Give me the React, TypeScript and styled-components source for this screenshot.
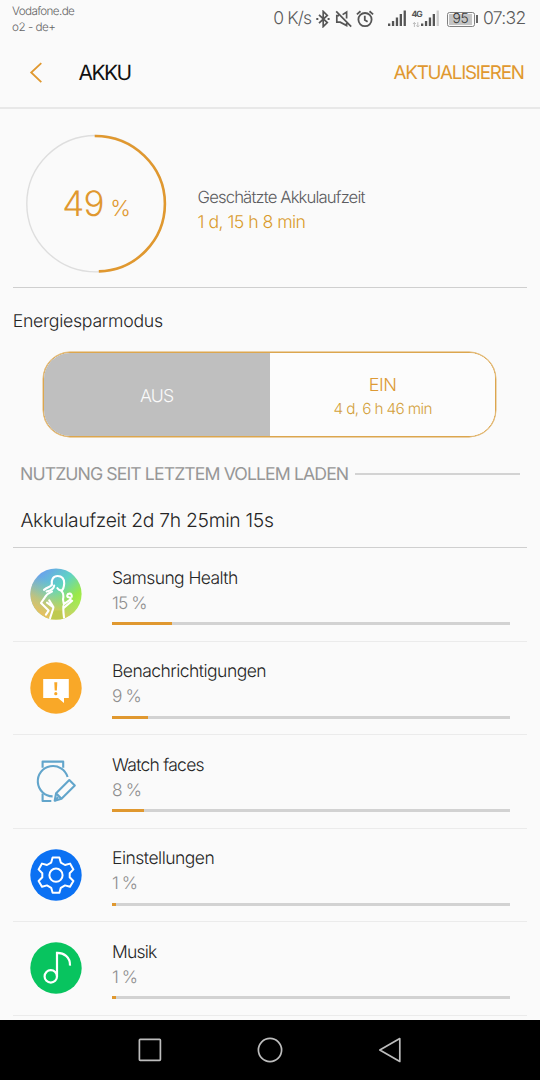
import React from 'react';
import styled, { createGlobalStyle } from 'styled-components';

const ORANGE = '#e0982f';

const GlobalStyle = createGlobalStyle`
  * { box-sizing: border-box; }
  body {
    margin: 0;
    background: #fafafa;
    font-family: 'Inter', 'Liberation Sans', sans-serif;
    text-rendering: geometricPrecision;
    -webkit-font-smoothing: antialiased;
  }
`;

const Screen = styled.main`
  display: flex;
  flex-direction: column;
  width: 540px;
  height: 1080px;
  background: #fafafa;
  overflow: hidden;
`;

interface LabelProps {
  $size: number;
  $line?: number;
  $track?: number;
  $weight?: number;
  $color?: string;
}

const Label = styled.span<LabelProps>`
  display: block;
  white-space: pre;
  font-size: ${p => p.$size}px;
  line-height: ${p => p.$line ?? 24}px;
  letter-spacing: ${p => p.$track ?? 0}px;
  font-weight: ${p => p.$weight ?? 300};
  color: ${p => p.$color ?? '#252525'};
`;

const StatusBar = styled.div`
  display: flex;
  justify-content: space-between;
  height: 38px;
  padding: 0 14.5px 0 12px;
`;

const Carriers = styled.div`
  padding-top: 2.6px;
`;

const StatusIcons = styled.div`
  display: flex;
  align-items: center;
  height: 38px;
  svg { display: block; flex: none; }
`;

const StatusGlyph = styled.svg<{ $gap: number }>`
  margin-left: ${p => p.$gap}px;
`;

const BarsIcon = styled.svg<{ $gap: number }>`
  margin: 0 0 2px ${p => p.$gap}px;
`;

const NetworkType = styled.div`
  width: 12px;
  margin-left: 5.5px;
`;

const BatteryBadge = styled.div`
  display: flex;
  align-items: center;
  justify-content: center;
  width: 28px;
  height: 15px;
  margin-left: 8px;
  border: 1px solid #808080;
  border-radius: 2.5px;
  background: linear-gradient(#c4c4c4, #c4c4c4) 1px center / 23px 11px no-repeat;
`;

const BatteryTip = styled.div`
  width: 2px;
  height: 8px;
  margin: 0 5.5px 0 1px;
  background: #666;
`;

const Header = styled.header`
  display: flex;
  align-items: center;
  height: 71px;
  padding: 0 16.3px 0 29px;
  border-bottom: 2px solid #e8e8e8;
`;

const Title = styled(Label)`
  flex: 1;
  margin-left: 35.5px;
  padding-top: 2px;
`;

const Summary = styled.section`
  display: flex;
  height: 179px;
  margin: 0 13px;
  padding-left: 11px;
  border-bottom: 1px solid #cfcfcf;
`;

const Gauge = styled.div`
  display: grid;
  width: 144px;
  height: 144px;
  margin-top: 23px;
  > * { grid-area: 1 / 1; }
`;

const GaugeValue = styled.div`
  display: flex;
  align-items: baseline;
  gap: 6.4px;
  padding: 51px 0 0 38.2px;
`;

const Estimate = styled.div`
  margin: 78.2px 0 0 29.6px;
`;

const PowerSaving = styled.section`
  height: 175px;
  padding: 22px 12px 0 12.7px;
`;

const Toggle = styled.div`
  display: flex;
  width: 452.6px;
  height: 85px;
  margin: 18px 0 0 30.7px;
  border: 1px solid #dca64e;
  border-radius: 27px;
  box-shadow: 0 0 0 0.4px #dca64e;
  overflow: hidden;
`;

const Option = styled.div<{ $active?: boolean }>`
  flex: 1;
  display: flex;
  flex-direction: column;
  align-items: center;
  justify-content: center;
  padding: ${p => (p.$active ? '4px 1.5px 0 0' : '5px 0 0')};
  background: ${p => (p.$active ? '#bfbfbf' : '#fcfcfc')};
`;

const UsageHeading = styled.div`
  display: flex;
  align-items: center;
  height: 24px;
  padding: 0 20.5px 0 20px;
  &::after {
    content: '';
    flex: 1;
    height: 2px;
    margin: 0 0 2px 7px;
    background: #d3d3d3;
  }
`;

const UsageTotal = styled.div`
  height: 61px;
  margin: 0 13px;
  padding: 21px 7.4px 0;
  border-bottom: 1px solid #cfcfcf;
`;

const AppList = styled.section`
  flex: 1;
  padding: 0 13px;
`;

const AppRow = styled.div`
  display: flex;
  height: 93.5px;
  padding: 0 17.5px 0 17px;
  border-bottom: 1.5px solid #ebebeb;
  > svg { flex: none; margin-top: 20.4px; }
`;

const AppInfo = styled.div`
  flex: 1;
  margin-left: 30px;
  padding-top: 18.8px;
`;

const Track = styled.div`
  height: 3px;
  margin-top: 6.6px;
  background: #d2d2d2;
`;

const Fill = styled.div`
  height: 100%;
  background: ${ORANGE};
`;

const NavBar = styled.nav`
  display: flex;
  align-items: center;
  justify-content: space-between;
  height: 60px;
  padding: 0 137px;
  background: #000;
`;

const HealthIcon = () => (
  <svg width="52" height="52" viewBox="0 0 52 52" fill="none">
    <defs>
      <linearGradient id="hg" x1="8" y1="6" x2="46" y2="46" gradientUnits="userSpaceOnUse">
        <stop offset="0" stopColor="#6aa0ee" />
        <stop offset=".42" stopColor="#5fd3c4" />
        <stop offset=".75" stopColor="#9ae84a" />
        <stop offset="1" stopColor="#b4ee4c" />
      </linearGradient>
      <linearGradient id="hy" x1="6" y1="46" x2="24" y2="16" gradientUnits="userSpaceOnUse">
        <stop offset="0" stopColor="#f0bc5c" />
        <stop offset=".4" stopColor="#dcc465" stopOpacity=".75" />
        <stop offset="1" stopColor="#9ed68a" stopOpacity="0" />
      </linearGradient>
      <clipPath id="hc"><circle cx="26" cy="26" r="25.6" /></clipPath>
    </defs>
    <g clipPath="url(#hc)">
      <rect width="52" height="52" fill="url(#hg)" />
      <rect width="52" height="52" fill="url(#hy)" />
      <path d="M19.5 50 22 42.5H33L35 51.5H19.5Z" fill="#bfca50" />
      <g stroke="#fff" strokeWidth="2.1" strokeLinecap="round" strokeLinejoin="round">
        <path d="M21.8 16.8C21 11.4 23.4 8 27.6 8c4.4 0 6.8 3 6.6 7.4-.2 3.6-.9 6-2.6 7.2-2-.2-3.4-1.1-4.2-2.4" />
        <path d="M21.8 16.8c-1 2.2-4 2.2-7.8 5M24.2 17.6c-.4 3.6-3.4 5-7.6 6" />
        <path d="M22 23.6C18.4 25 16.2 27 14.7 29.6L11 35 18.6 42.6 15.9 46.6M19.2 32.4 23.4 39M17 34.6 23.4 39.4" />
        <path d="M31.6 23.2c1.8 1.8 2.2 4.6 1.4 8.2l.8 4.8L40.6 31.4c.3-1.3-.7-1.9-1.9-2.1-2.2-.5-1.8-3.6.6-3.7 2-.1 2.7 1.5 2.4 3.2M34 39.6l8.2-6.8" />
        <path d="M23.2 40.5 19.8 51M33.4 38c-.4 5 .4 9.5.8 13" />
      </g>
    </g>
  </svg>
);

const NotificationIcon = () => (
  <svg width="52" height="52" viewBox="0 0 52 52">
    <circle cx="26" cy="26" r="25.7" fill="#f9a828" />
    <path d="M13.2 17.1H38.8V35.9H34V41L28 35.9H13.2Z" fill="#fff" />
    <path d="M24.3 20.2H27.3L26.9 28.4H24.7Z" fill="#f9a828" />
    <circle cx="25.8" cy="31.7" r="1.6" fill="#f9a828" />
  </svg>
);

const WatchIcon = () => (
  <svg width="52" height="52" viewBox="0 0 52 52" fill="none" stroke="#62a5cb" strokeWidth="2.1" strokeLinejoin="round">
    <path d="M12.6 12.8V6.6H33.2V12.8" />
    <path d="M37.6 22A15.2 15.2 0 1 0 22.6 41.4" />
    <path d="M12.6 38.6V46H21.3" />
    <path d="M39.3 25.1 44.8 30.6 31.5 43.8 24.7 45.7 26.1 38.3ZM26.1 38.3 31.5 43.8" />
    <path d="M24.7 45.7 28.2 42" />
  </svg>
);

const SettingsIcon = () => (
  <svg width="52" height="52" viewBox="0 0 52 52" fill="none">
    <circle cx="26" cy="26" r="25.7" fill="#0b71f3" />
    <g stroke="#fff" strokeWidth="2" strokeLinejoin="round">
      <path d="M22.6 8.5H29.4L30.8 13.6 35 16 40 14.6 43.4 20.4 39.7 24.2V28.2L43.4 32 40 37.8 35 36.4 30.8 38.8 29.4 43.7H22.6L21.2 38.8 17 36.4 12 37.8 8.6 32 12.3 28.2V24.2L8.6 20.4 12 14.6 17 16 21.2 13.6Z" />
      <circle cx="26" cy="26.2" r="6.6" />
    </g>
  </svg>
);

const MusicIcon = () => (
  <svg width="52" height="52" viewBox="0 0 52 52" fill="none">
    <circle cx="26" cy="26" r="25.7" fill="#08c45f" />
    <g stroke="#fff" strokeWidth="2.2">
      <circle cx="20.8" cy="34.4" r="6.2" />
      <path d="M27 34.6V10.8C33.5 10.6 40.4 14.8 40 23.6" />
    </g>
  </svg>
);

const Bars = ({ gap, weak }: { gap: number; weak?: boolean }) => (
  <BarsIcon $gap={gap} width="18" height="18" viewBox="0 0 18 18" fill="#555">
    <path d="M0 14.6h2.3V17H0zM3.9 12h2.3v5H3.9zM7.8 8.4h2.3V17H7.8zM11.7 5H14v12h-2.3z" />
    <path d="M15.6 1.5h2.3V17h-2.3z" fill={weak ? '#cdcdcd' : '#555'} />
  </BarsIcon>
);

const apps = [
  { name: 'Samsung Health', track: -0.58, percent: 15, Icon: HealthIcon },
  { name: 'Benachrichtigungen', track: -0.53, percent: 9, Icon: NotificationIcon },
  { name: 'Watch faces', track: -0.75, percent: 8, Icon: WatchIcon },
  { name: 'Einstellungen', track: -0.5, percent: 1, Icon: SettingsIcon },
  { name: 'Musik', track: -0.8, percent: 1, Icon: MusicIcon },
];

export default function App() {
  return (
    <Screen>
      <GlobalStyle />
      <StatusBar>
        <Carriers>
          <Label $size={11.7} $line={16.6} $track={-0.62} $color="#666">Vodafone.de</Label>
          <Label $size={11.7} $line={16.6} $track={-0.5} $color="#666">o2 - de+</Label>
        </Carriers>
        <StatusIcons>
          <Label $size={17.5} $track={-0.85} $color="#5c5c5c">0 K/s</Label>
          <StatusGlyph $gap={4.5} width="15" height="18" viewBox="0 0 15 18" fill="none" stroke="#555" strokeWidth="1.7">
            <path d="M3 4.8 11.3 12.6 7.2 16.6V1.4L11.3 5.4 3 13.2" />
            <path d="M.3 9H2.3M11.6 9H13.6" strokeWidth="2" />
          </StatusGlyph>
          <StatusGlyph $gap={4} width="18" height="18" viewBox="0 0 18 18" fill="none" stroke="#555" strokeWidth="1.7">
            <path d="M1.2 1.4 16.2 16.6M4 5.6H1.8V12.2H5.2L11.6 15.6V13M7.6 4.6 11.6 2V8.4" />
          </StatusGlyph>
          <StatusGlyph $gap={3} width="18" height="18" viewBox="0 0 18 18" fill="none" stroke="#555" strokeWidth="1.8">
            <circle cx="9" cy="9.6" r="6.6" />
            <path d="M.9 4.4 4.5 1.3M17.1 4.4 13.5 1.3M8.8 5.8V10L11.6 11.8" />
          </StatusGlyph>
          <Bars gap={14.3} />
          <NetworkType>
            <Label $size={8.6} $line={11} $track={-1} $weight={700} $color="#555">4G</Label>
            <svg width="9" height="7" viewBox="0 0 9 7" fill="none" stroke="#bbb">
              <path d="M2.4 6V1.6M1 3 2.4 1.4 3.8 3M5.8 1.2V5.8M4.4 4.4 5.8 6 7.2 4.4" />
            </svg>
          </NetworkType>
          <Bars gap={-3} weak />
          <BatteryBadge>
            <Label $size={13.8} $line={13} $track={-0.3} $color="#333">95</Label>
          </BatteryBadge>
          <BatteryTip />
          <Label $size={17.5} $track={-0.7} $color="#5c5c5c">07:32</Label>
        </StatusIcons>
      </StatusBar>

      <Header>
        <svg width="14" height="22" viewBox="0 0 14 22" fill="none" stroke={ORANGE} strokeWidth="1.8">
          <path d="M12.3 1.2 2.2 10.5 12.3 20.2" />
        </svg>
        <Title $size={21} $track={-1.6} $weight={400} $color="#111">AKKU</Title>
        <Label $size={18.8} $track={-1.2} $weight={400} $color={ORANGE}>AKTUALISIEREN</Label>
      </Header>

      <Summary>
        <Gauge>
          <svg width="144" height="144" viewBox="0 0 144 144" fill="none">
            <ellipse cx="72" cy="71.7" rx="69.2" ry="68.2" stroke="#dedede" strokeWidth="1.4" />
            <path d="M70.7 4A70.2 67.8 0 0 1 140.9 71.8A67.8 67.8 0 0 1 74.8 139.4" stroke={ORANGE} strokeWidth="2.6" />
          </svg>
          <GaugeValue>
            <Label $size={35} $line={42} $track={-0.7} $color={ORANGE}>49</Label>
            <Label $size={22} $line={42} $color={ORANGE}>%</Label>
          </GaugeValue>
        </Gauge>
        <Estimate>
          <Label $size={16.7} $line={23.6} $track={-0.87} $color="#5c5c60">Geschätzte Akkulaufzeit</Label>
          <Label $size={17.7} $line={23.6} $track={-0.55} $color="#d99a2b">1 d, 15 h 8 min</Label>
        </Estimate>
      </Summary>

      <PowerSaving>
        <Label $size={17.7} $track={-0.28}>Energiesparmodus</Label>
        <Toggle>
          <Option $active>
            <Label $size={17.7} $track={-0.8} $color="#fafafa">AUS</Label>
          </Option>
          <Option>
            <Label $size={18} $line={24} $track={-0.4} $color="#dd9a35">EIN</Label>
            <Label $size={15.3} $line={22.5} $track={-0.63} $color="#d3a03a">4 d, 6 h 46 min</Label>
          </Option>
        </Toggle>
      </PowerSaving>

      <UsageHeading>
        <Label $size={17.7} $track={-0.92} $weight={400} $color="#979797">NUTZUNG SEIT LETZTEM VOLLEM LADEN</Label>
      </UsageHeading>
      <UsageTotal>
        <Label $size={19.3} $track={-0.3}>Akkulaufzeit 2d 7h 25min 15s</Label>
      </UsageTotal>

      <AppList>
        {apps.map(({ name, track, percent, Icon }) => (
          <AppRow key={name}>
            <Icon />
            <AppInfo>
              <Label $size={17.5} $track={track}>{name}</Label>
              <Label $size={17.3} $line={25} $track={-0.9} $color="#8e8e8e">{percent} %</Label>
              <Track><Fill style={{ width: `${percent}%` }} /></Track>
            </AppInfo>
          </AppRow>
        ))}
      </AppList>

      <NavBar>
        <svg width="26" height="26" viewBox="0 0 26 26" fill="none" stroke="#bdbdbd" strokeWidth="1.7">
          <rect x="2.4" y="2.4" width="21" height="21" rx=".8" />
        </svg>
        <svg width="26" height="26" viewBox="0 0 26 26" fill="none" stroke="#bdbdbd" strokeWidth="1.7">
          <circle cx="13" cy="13" r="11.6" />
        </svg>
        <svg width="26" height="26" viewBox="0 0 26 26" fill="none" stroke="#bdbdbd" strokeWidth="1.7" strokeLinejoin="round">
          <path d="M22.8 1.6V24.4L2.8 13Z" />
        </svg>
      </NavBar>
    </Screen>
  );
}
